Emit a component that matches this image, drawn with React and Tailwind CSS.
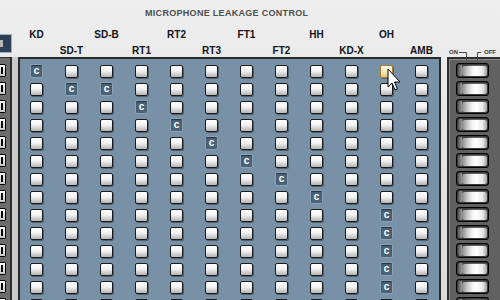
import React from "react";

const COLS = ["KD", "SD-T", "SD-B", "RT1", "RT2", "RT3", "FT1", "FT2", "HH", "KD-X", "OH", "AMB"];
const C_MAP = [[0], [1, 2], [3], [4], [5], [6], [7], [8], [10], [10], [10], [10], [10], []];
const ROWS = C_MAP.length;

function Btn({ kind }) {
  if (kind === "c") {
    return (
      <div className="w-[13px] h-[14px] -mt-[1px] rounded-[2px] border border-[#8ea2b3] bg-[#4a6378] shadow-[inset_0_1px_1px_rgba(0,0,0,0.5)] flex items-center justify-center text-white text-[10px] font-bold leading-none pb-[1px]">
        c
      </div>
    );
  }
  if (kind === "hi") {
    return (
      <div className="w-[13px] h-[13px] rounded-[2px] border border-[#b07a2a] bg-[linear-gradient(180deg,#fffbe6_0%,#fbe9b8_50%,#e8c886_100%)] shadow-[1px_1px_0_rgba(0,0,0,0.3)]" />
    );
  }
  return (
    <div className="w-[13px] h-[13px] rounded-[2px] border border-[#1c1c1c] bg-[linear-gradient(180deg,#ffffff_0%,#f3f3f3_45%,#b4b4b4_100%)] shadow-[1px_1px_0_rgba(0,0,0,0.35)]" />
  );
}

function Switch() {
  return (
    <div className="w-[33px] h-[15px] rounded-[3px] border border-black bg-[#3a3a3a] flex p-[1px]">
      <div className="w-[4px] h-full rounded-l-[2px] bg-[linear-gradient(90deg,#555555,#9a9a9a)]" />
      <div className="flex-1 h-full rounded-[2px] bg-[linear-gradient(90deg,#8a8a8a_0%,#c6c6c6_20%,#f4f4f4_42%,#ffffff_58%,#e8e8e8_82%,#a2a2a2_100%)] shadow-[inset_0_1px_0_rgba(0,0,0,0.6)]" />
    </div>
  );
}

export default function App() {
  return (
    <div className="relative w-[500px] h-[300px] overflow-hidden bg-[linear-gradient(180deg,#eeeeee_0%,#e2e2e2_60%,#dadada_100%)] font-['Liberation_Sans',Arial,sans-serif]">
      <div className="h-[26px] pl-[145px] pt-[7px] text-[9px] leading-[12px] font-bold tracking-[0.3px] text-[#4d4d4d]">
        MICROPHONE LEAKAGE CONTROL
      </div>

      <div className="flex items-start">
        {/* left strip */}
        <div className="w-[18px] flex flex-col">
          <div className="mt-[8px] w-[12px] h-[19px] border border-[#9fb0c0] border-l-0 bg-[#2d3f57] relative">
            <div className="absolute left-0 top-[5px] w-[3px] h-[7px] bg-[#b8b8b8]" />
          </div>
          <div className="mt-[4px] flex h-[260px]">
            <div className="w-[12px] h-full bg-[#6d6d6d] border-t border-r-2 border-[#2b2b2b] flex flex-col pt-[6px] gap-[5px]">
              {Array.from({ length: ROWS }).map((_, i) => (
                <div key={i} className="w-[6px] h-[13px] rounded-r-[2px] border border-l-0 border-black bg-[linear-gradient(180deg,#ffffff,#c8c8c8)] flex items-center">
                  <div className="w-[2px] h-[7px] bg-black ml-[1px]" />
                </div>
              ))}
            </div>
            <div className="w-[6px] h-full bg-[#cacaca]" />
          </div>
        </div>

        {/* main */}
        <div className="w-[425px] flex flex-col">
          <div className="h-[31px] pl-[1px] grid grid-cols-[repeat(12,35px)]">
            {COLS.map((c, i) => (
              <div
                key={c}
                className={`text-center text-[10px] leading-[12px] font-bold text-[#111318] ${i % 2 === 0 ? "pt-[3px]" : "pt-[19px]"}`}
              >
                {c}
              </div>
            ))}
          </div>
          <div className="h-[260px] border-2 border-[#2a2a2a] bg-[#7991a6]">
            <div className="-ml-[1px] pt-[6px] grid grid-cols-[repeat(12,35px)] auto-rows-[18px]">
              {C_MAP.map((cs, r) =>
                COLS.map((_, c) => {
                  let kind = cs.includes(c) ? "c" : "n";
                  if (r === 0 && c === 10) kind = "hi";
                  return (
                    <div key={`${r}-${c}`} className="flex justify-center items-start">
                      <Btn kind={kind} />
                    </div>
                  );
                })
              )}
            </div>
          </div>
        </div>

        {/* right */}
        <div className="ml-[6px] relative flex flex-col">
          <div className="h-[31px] pt-[22px] pl-[2px] flex text-[6px] leading-[8px] font-bold text-[#333]">
            <span>ON</span>
            <span className="ml-[26px]">OFF</span>
          </div>
          <div className="w-[60px] h-[260px] border-2 border-[#2e2e2e] bg-[#616161] shadow-[inset_1px_1px_0_#8a8a8a] flex flex-col gap-[3px] pl-[7px] pt-[4px]">
            {Array.from({ length: ROWS }).map((_, i) => (
              <Switch key={i} />
            ))}
          </div>
          <svg className="absolute left-0 top-0" width="51" height="40" viewBox="0 0 51 40">
            <path d="M12 26.5 H19.5 V37" fill="none" stroke="#4a4a4a" strokeWidth="1" />
            <path d="M34 26.5 H30.5 V37" fill="none" stroke="#4a4a4a" strokeWidth="1" />
          </svg>
        </div>
      </div>

      {/* mouse cursor */}
      <svg className="absolute left-[387px] top-[68px]" width="14" height="24" viewBox="0 0 14 24">
        <path d="M1 1 V19 L5 15 L8 22 L10.5 21 L7.5 14 L13 14 Z" fill="#ffffff" stroke="#000000" strokeWidth="1" strokeLinejoin="miter" />
      </svg>
    </div>
  );
}
